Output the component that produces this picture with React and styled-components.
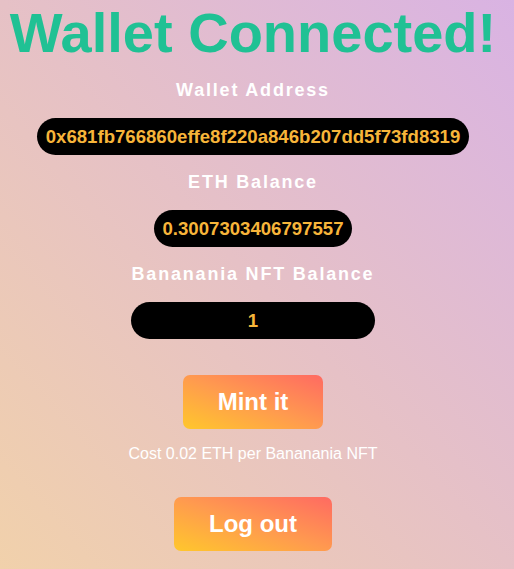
import React from "react";
import styled, { createGlobalStyle } from "styled-components";

const GlobalStyle = createGlobalStyle`
  html, body {
    margin: 0;
    padding: 0;
    min-height: 100%;
  }
  body {
    font-family: "Liberation Sans", Arial, sans-serif;
    background: linear-gradient(to top right, #f1d1ab 0%, #e6c1c6 50%, #d9b3e3 100%);
    background-attachment: fixed;
    min-height: 100vh;
  }
`;

const Page = styled.main`
  min-height: 100vh;
  box-sizing: border-box;
  padding: 0 8px 20px 0;
  display: flex;
  flex-direction: column;
  align-items: center;
`;

const Title = styled.h1`
  margin: 0 0 15px;
  font-size: 56px;
  font-weight: 700;
  line-height: normal;
  color: #20c194;
  white-space: nowrap;
`;

const Section = styled.section`
  display: flex;
  flex-direction: column;
  align-items: center;
  gap: 17px;
  margin-bottom: 17px;
`;

const Label = styled.h3`
  margin: 0;
  font-size: 18px;
  line-height: 21px;
  font-weight: 700;
  letter-spacing: 0.1em;
  color: #ffffff;
`;

const Pill = styled.div`
  box-sizing: border-box;
  min-width: ${(p) => p.$minWidth || 0}px;
  padding: 8px 9px;
  background: #000;
  border-radius: 19px;
  color: #f7b53a;
  font-size: 18.6px;
  line-height: 21px;
  font-weight: 700;
  text-align: center;
`;

const GradientButton = styled.button`
  margin-top: ${(p) => p.$top}px;
  padding: 13px 35px;
  border: none;
  border-radius: 7px;
  background: linear-gradient(to top right, #ffc72c 0%, #ff9a4f 50%, #ff6a62 100%);
  color: #ffffff;
  font-family: "Liberation Sans", Arial, sans-serif;
  font-size: 24px;
  line-height: 28px;
  font-weight: 700;
  cursor: pointer;
`;

const Note = styled.p`
  margin: 16px 0 0;
  font-size: 16px;
  line-height: 18.4px;
  color: #ffffff;
`;

const fields = [
  { label: "Wallet Address", value: "0x681fb766860effe8f220a846b207dd5f73fd8319" },
  { label: "ETH Balance", value: "0.3007303406797557" },
  { label: "Bananania NFT Balance", value: "1", minWidth: 244 },
];

export default function App() {
  return (
    <>
      <GlobalStyle />
      <Page>
        <Title>Wallet Connected!</Title>
        {fields.map((f) => (
          <Section key={f.label}>
            <Label>{f.label}</Label>
            <Pill $minWidth={f.minWidth}>{f.value}</Pill>
          </Section>
        ))}
        <GradientButton $top={19}>Mint it</GradientButton>
        <Note>Cost 0.02 ETH per Bananania NFT</Note>
        <GradientButton $top={34}>Log out</GradientButton>
      </Page>
    </>
  );
}
